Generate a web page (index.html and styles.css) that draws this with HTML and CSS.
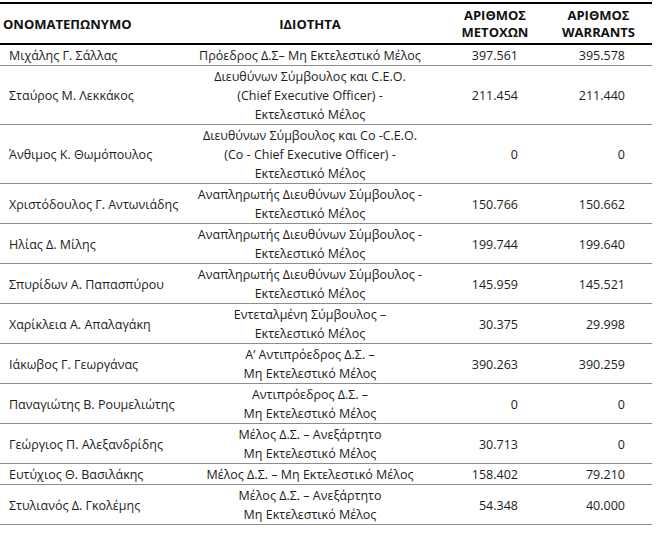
FILE: index.html
```html
<!DOCTYPE html>
<html lang="el">
<head>
<meta charset="utf-8">
<link rel="stylesheet" href="styles.css">
</head>
<body>
<table class="board">
  <colgroup>
    <col class="c-name"><col class="c-role"><col class="c-shares"><col class="c-warr">
  </colgroup>
  <thead>
    <tr>
      <th class="h-name">ΟΝΟΜΑΤΕΠΩΝΥΜΟ</th>
      <th>ΙΔΙΟΤΗΤΑ</th>
      <th>ΑΡΙΘΜΟΣ<br>ΜΕΤΟΧΩΝ</th>
      <th>ΑΡΙΘΜΟΣ<br>WARRANTS</th>
    </tr>
  </thead>
  <tbody>
    <tr><td class="name">Μιχάλης Γ. Σάλλας</td><td class="role">Πρόεδρος Δ.Σ– Μη Εκτελεστικό Μέλος</td><td class="num">397.561</td><td class="num">395.578</td></tr>
    <tr><td class="name">Σταύρος Μ. Λεκκάκος</td><td class="role">Διευθύνων Σύμβουλος και C.E.O.<br>(Chief Executive Officer) -<br>Εκτελεστικό Μέλος</td><td class="num">211.454</td><td class="num">211.440</td></tr>
    <tr><td class="name">Άνθιμος Κ. Θωμόπουλος</td><td class="role">Διευθύνων Σύμβουλος και Co -C.E.O.<br>(Co - Chief Executive Officer) -<br>Εκτελεστικό Μέλος</td><td class="num">0</td><td class="num">0</td></tr>
    <tr><td class="name">Χριστόδουλος Γ. Αντωνιάδης</td><td class="role">Αναπληρωτής Διευθύνων Σύμβουλος -<br>Εκτελεστικό Μέλος</td><td class="num">150.766</td><td class="num">150.662</td></tr>
    <tr><td class="name">Ηλίας Δ. Μίλης</td><td class="role">Αναπληρωτής Διευθύνων Σύμβουλος -<br>Εκτελεστικό Μέλος</td><td class="num">199.744</td><td class="num">199.640</td></tr>
    <tr><td class="name">Σπυρίδων Α. Παπασπύρου</td><td class="role">Αναπληρωτής Διευθύνων Σύμβουλος -<br>Εκτελεστικό Μέλος</td><td class="num">145.959</td><td class="num">145.521</td></tr>
    <tr><td class="name">Χαρίκλεια Α. Απαλαγάκη</td><td class="role">Εντεταλμένη Σύμβουλος –<br>Εκτελεστικό Μέλος</td><td class="num">30.375</td><td class="num">29.998</td></tr>
    <tr><td class="name">Ιάκωβος Γ. Γεωργάνας</td><td class="role">Α’ Αντιπρόεδρος Δ.Σ. –<br>Μη Εκτελεστικό Μέλος</td><td class="num">390.263</td><td class="num">390.259</td></tr>
    <tr><td class="name">Παναγιώτης Β. Ρουμελιώτης</td><td class="role">Αντιπρόεδρος Δ.Σ. –<br>Μη Εκτελεστικό Μέλος</td><td class="num">0</td><td class="num">0</td></tr>
    <tr><td class="name">Γεώργιος Π. Αλεξανδρίδης</td><td class="role">Μέλος Δ.Σ. – Ανεξάρτητο<br>Μη Εκτελεστικό Μέλος</td><td class="num">30.713</td><td class="num">0</td></tr>
    <tr><td class="name">Ευτύχιος Θ. Βασιλάκης</td><td class="role">Μέλος Δ.Σ. – Μη Εκτελεστικό Μέλος</td><td class="num">158.402</td><td class="num">79.210</td></tr>
    <tr><td class="name">Στυλιανός Δ. Γκολέμης</td><td class="role">Μέλος Δ.Σ. – Ανεξάρτητο<br>Μη Εκτελεστικό Μέλος</td><td class="num">54.348</td><td class="num">40.000</td></tr>
  </tbody>
</table>
</body>
</html>
```
FILE: styles.css
```css
html, body {
  margin: 0;
  padding: 0;
  background: #fff;
}
body {
  padding-top: 2px;
  font-family: "Open Sans", "Noto Sans", sans-serif;
  font-size: 12.5px;
  color: #1c1c1c;
}
.board {
  width: 652px;
  border-collapse: collapse;
  table-layout: fixed;
}
.c-name { width: 175px; }
.c-role { width: 270px; }
.c-shares { width: 100px; }
.c-warr { width: 107px; }
.board thead tr {
  border-top: 2px solid #000;
  border-bottom: 2px solid #000;
}
.board th {
  font-weight: bold;
  font-size: 13px;
  line-height: 17px;
  padding: 3px 0 2px;
  text-align: center;
  color: #111;
  white-space: nowrap;
}
.board th.h-name {
  text-align: left;
  padding-left: 3px;
}
.board td {
  line-height: 19px;
  padding: 1px 0 0;
  border-bottom: 1px solid #8c8c8c;
  vertical-align: middle;
}
.board td.name {
  padding-left: 9px;
  white-space: nowrap;
}
.board td.role {
  text-align: center;
}
.board td.num {
  text-align: right;
  padding-right: 27px;
}
```
